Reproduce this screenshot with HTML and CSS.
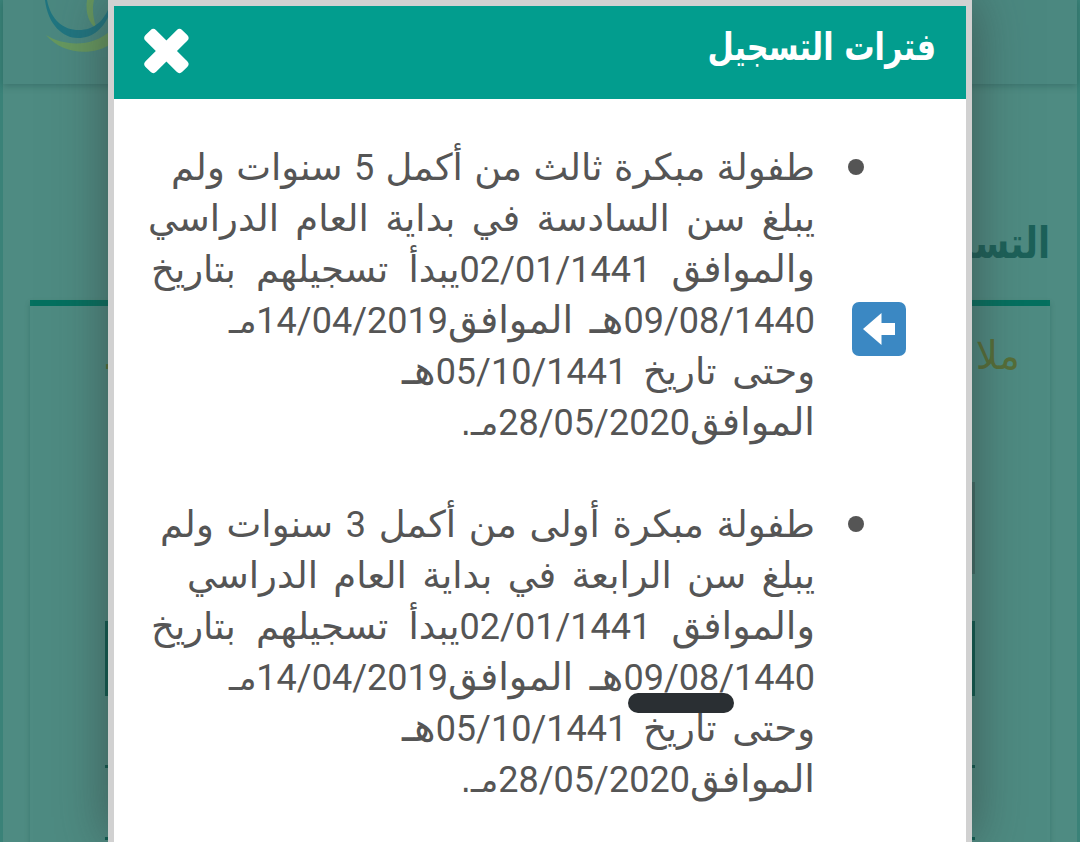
FILE: index.html
```html
<!DOCTYPE html>
<html lang="ar" dir="rtl">
<head>
<meta charset="utf-8">
<title>فترات التسجيل</title>
<link rel="stylesheet" href="styles.css">
</head>
<body>
<div class="page">
  <header class="site-header">
    <svg class="logo" width="100" height="60" viewBox="0 0 100 60">
      <path d="M44 0C42 12 46 24 54 29C50 20 49 8 51 0Z" fill="#66985f"/>
      <path d="M2 0C5 25 20 38 35 38C50 38 62 28 68 10V2C62 22 50 30 36 30C20 30 8 20 4 0Z" fill="#207580"/>
      <path d="M3 35C20 46 50 48 68 30V44C50 56 20 55 3 35Z" fill="#66985f"/>
    </svg>
  </header>
  <main class="content">
    <h1 class="page-title">التسجيل</h1>
    <section class="panel">
      <p class="note"><span>ملا</span><span>.</span></p>
      <div class="table">
        <div class="table-field"></div>
        <div class="table-head"></div>
        <div class="table-row"></div>
        <div class="table-row"></div>
      </div>
    </section>
  </main>
</div>
<div class="modal" role="dialog">
  <div class="modal-header">
    <h2 class="modal-title">فترات التسجيل</h2>
    <svg class="close" width="46" height="46" viewBox="0 0 46 46">
      <g fill="#fff" transform="translate(22.4 23)"><rect x="-26" y="-7.5" width="52" height="15" rx="4" transform="rotate(45)"/><rect x="-26" y="-7.5" width="52" height="15" rx="4" transform="rotate(-45)"/></g>
    </svg>
  </div>
  <ul class="periods">
    <li class="period">
      <span class="line w-a1">طفولة مبكرة ثالث من أكمل <b>5</b> سنوات ولم</span>
      <span class="line w-a2">يبلغ سن السادسة في بداية العام الدراسي</span>
      <span class="line w-3"><span class="wide">والموافق</span> <b>02/01/1441</b>يبدأ تسجيلهم بتاريخ</span>
      <span class="line w-4"><b>09/08/1440</b><span class="hijri">هـ</span> <span class="wide">الموافق</span><b>14/04/2019</b><span class="greg">مـ</span></span>
      <span class="line w-5">وحتى تاريخ <b>05/10/1441</b><span class="hijri">هـ</span></span>
      <span class="line w-6"><span class="wide">الموافق</span><b>28/05/2020</b><span class="greg">مـ.</span></span>
      <svg class="arrow" width="54" height="54" viewBox="0 0 54 54"><rect width="54" height="54" rx="7" fill="#3b88c3"/><path d="M11 27L29.500 11V21H43V33H29.500V43Z" fill="#fff"/></svg>
    </li>
    <li class="period">
      <span class="line w-b1">طفولة مبكرة أولى من أكمل <b>3</b> سنوات ولم</span>
      <span class="line w-b2">يبلغ سن الرابعة في بداية العام الدراسي</span>
      <span class="line w-3"><span class="wide">والموافق</span> <b>02/01/1441</b>يبدأ تسجيلهم بتاريخ</span>
      <span class="line w-4"><b>09/08/1440</b><span class="hijri">هـ</span> <span class="wide">الموافق</span><b>14/04/2019</b><span class="greg">مـ</span></span>
      <span class="line w-5">وحتى تاريخ <b>05/10/1441</b><span class="hijri">هـ</span></span>
      <span class="line w-6"><span class="wide">الموافق</span><b>28/05/2020</b><span class="greg">مـ.</span></span>
      <span class="marker"></span>
    </li>
  </ul>
</div>
</body>
</html>
```
FILE: styles.css
```css
* { box-sizing: border-box; }
body { margin: 0; width: 1080px; height: 842px; overflow: hidden; position: relative; font-family: "DejaVu Sans", sans-serif; background: #4e8b82; }
.page { height: 842px; border: solid #3a8278; border-width: 0 3px; }
.site-header { height: 84px; background: #4b8880; box-shadow: 0 2px 7px rgba(20, 70, 65, .35); direction: ltr; padding-left: 40px; }
.logo { display: block; }
.content { padding: 116px 27px 0; }
.page-title { margin: 0; height: 100px; line-height: 86px; font-size: 43px; color: #1c6159; transform: scaleX(.82); transform-origin: right; }
.panel { height: 560px; border-top: 6px solid #04705f; box-shadow: 0 3px 5px rgba(20, 80, 70, .3); }
.note { display: flex; justify-content: space-between; margin: 0; padding: 24px 30px 0 72px; height: 176px; line-height: 52px; font-size: 39px; color: #566f38; }
.table { margin: 0 75px; }
.table-field { height: 92px; background: #406e69; margin-bottom: 47px; margin-left: 30px; }
.table-head { height: 75px; background: #0b5c50; }
.table-row { height: 72px; border-bottom: 3px solid #0b5c50; }
.modal { position: absolute; left: 108px; top: 0; width: 864px; height: 842px; border: 6px solid #d1d1d1; border-bottom: 0; background: #fff; box-shadow: 0 0 50px rgba(50, 50, 50, .55); }
.modal-header { height: 93px; background: #029d8e; display: flex; justify-content: space-between; padding: 22px 30px 0 30px; }
.modal-title { margin: 0; color: #fff; font-size: 38px; line-height: 39px; width: 227px; white-space: nowrap; transform: scaleX(.797); transform-origin: right; }
.periods { list-style: none; margin: 0; padding: 43px 151px 0 0; }
.period { position: relative; height: 357px; color: #555; font-size: 37px; }
.period::before { content: ""; position: absolute; right: -49px; top: 17px; width: 16px; height: 16px; border-radius: 50%; background: #555; }
.line { display: block; height: 51px; line-height: 51px; white-space: nowrap; text-align-last: justify; }
.line b { font: 400 36px/1 Roboto, sans-serif; }
.wide, .hijri, .greg { line-height: 1; }
.wide { font-size: 38.3px; }
.hijri { font-size: 41px; }
.greg { font-size: 33px; }
.w-a1 { width: 644px; word-spacing: -.5px; }
.w-a2 { width: 667px; }
.w-b1 { width: 655px; }
.w-b2 { width: 628px; }
.w-3 { width: 664px; }
.w-4 { width: 586px; }
.w-5 { width: 413px; }
.w-6 { width: 355px; }
.arrow { position: absolute; right: -91px; top: 160px; }
.marker { position: absolute; right: 81px; top: 194px; width: 106px; height: 20px; border-radius: 10px; background: #2a2f33; }
```
